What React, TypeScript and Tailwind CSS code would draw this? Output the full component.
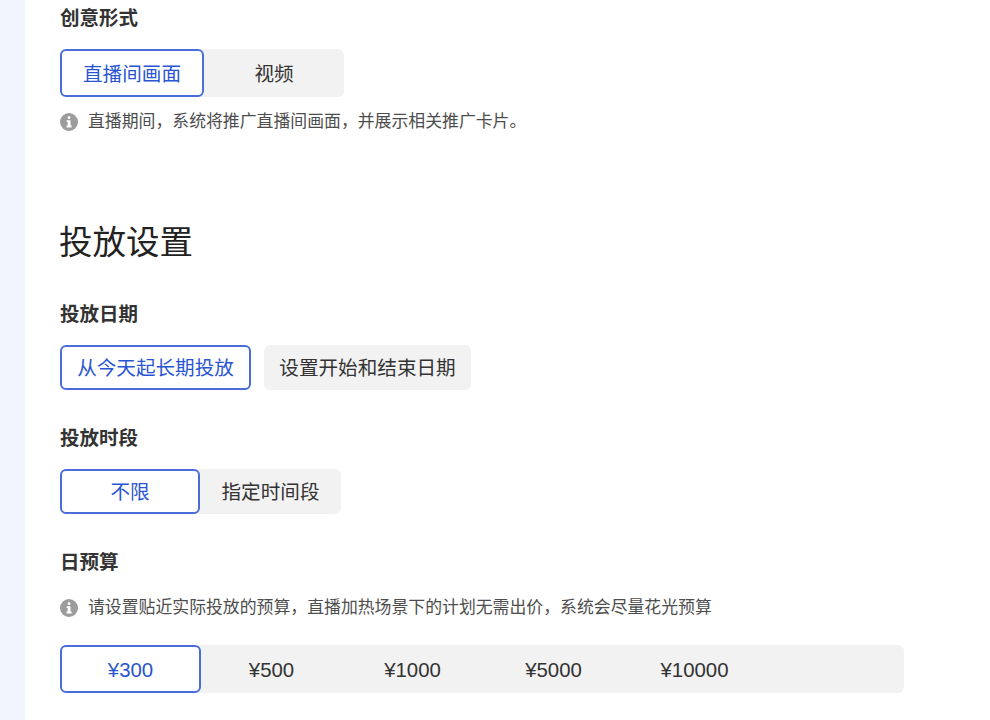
const budgets = ['¥500', '¥1000', '¥5000', '¥10000'];

function Label({ children }: { children: string }) {
  return <div className="h-[28px] text-[19.5px] leading-[28px] font-semibold text-[#333333]">{children}</div>;
}

function InfoIcon() {
  return (
    <svg viewBox="0 0 18 18" className="h-[18px] w-[18px] shrink-0">
      <circle cx="9" cy="9" r="9" fill="#9c9c9c" />
      <rect x="7.7" y="3.2" width="2.7" height="2.7" rx="1.2" fill="#ffffff" />
      <path d="M6.6 7.2h3.9v5.3h1.1v1.9H6.5v-1.9h1.2V9.1H6.6z" fill="#ffffff" />
    </svg>
  );
}

function Hint({ text }: { text: string }) {
  return (
    <div className="flex h-[24px] items-center text-[16.86px] leading-[24px] text-[#4d4d4d]">
      <InfoIcon />
      <span className="ml-[10px]">{text}</span>
    </div>
  );
}

function Selected({ children, className }: { children: string; className: string }) {
  return (
    <div className={`flex shrink-0 items-center justify-center rounded-[6px] border-2 border-[#4a6dd8] bg-white text-[#2a55d2] ${className}`}>
      {children}
    </div>
  );
}

export default function App() {
  return (
    <div
      className="flex h-[720px] w-[990px] overflow-hidden bg-white text-[19.6px]"
      style={{ fontFamily: '"Liberation Sans", "Noto Sans CJK SC", sans-serif' }}
    >
      <div className="w-[25px] shrink-0 bg-[#f0f5fe]" />
      <div className="flex-1 pl-[35px] pt-[4px]">
        {/* 创意形式 */}
        <Label>创意形式</Label>
        <div className="mt-[17px] flex h-[48px] w-[284px] rounded-[6px] bg-[#f2f2f2]">
          <Selected className="w-[144px] pt-[4px]">直播间画面</Selected>
          <div className="flex flex-1 items-center justify-center pt-[4px] text-[#333333]">视频</div>
        </div>
        <div className="mt-[13px]">
          <Hint text="直播期间，系统将推广直播间画面，并展示相关推广卡片。" />
        </div>

        {/* 投放设置 */}
        <h2 className="mt-[84px] -ml-px h-[48px] text-[33.5px] leading-[50px] font-normal text-[#222222]">投放设置</h2>

        <div className="mt-[34px]">
          <Label>投放日期</Label>
        </div>
        <div className="mt-[17px] flex h-[45px] gap-[13px]">
          <Selected className="w-[191px] pt-[2px]">从今天起长期投放</Selected>
          <div className="flex w-[207px] items-center justify-center rounded-[6px] bg-[#f2f2f2] pt-[2px] text-[#333333]">
            设置开始和结束日期
          </div>
        </div>

        <div className="mt-[34px]">
          <Label>投放时段</Label>
        </div>
        <div className="mt-[17px] flex h-[45px] w-[281px] rounded-[6px] bg-[#f2f2f2]">
          <Selected className="w-[140px] pt-[2px]">不限</Selected>
          <div className="flex flex-1 items-center justify-center pt-[2px] text-[#333333]">指定时间段</div>
        </div>

        <div className="mt-[34px]">
          <Label>日预算</Label>
        </div>
        <div className="mt-[20px]">
          <Hint text="请设置贴近实际投放的预算，直播加热场景下的计划无需出价，系统会尽量花光预算" />
        </div>
        <div className="mt-[25px] flex h-[48px] w-[844px] rounded-[6px] bg-[#f2f2f2] text-[20.4px]">
          <Selected className="w-[141px] pt-[2px]">¥300</Selected>
          {budgets.map((b) => (
            <div key={b} className="flex w-[141px] items-center justify-center pt-[2px] text-[#333333]">
              {b}
            </div>
          ))}
        </div>
      </div>
    </div>
  );
}
